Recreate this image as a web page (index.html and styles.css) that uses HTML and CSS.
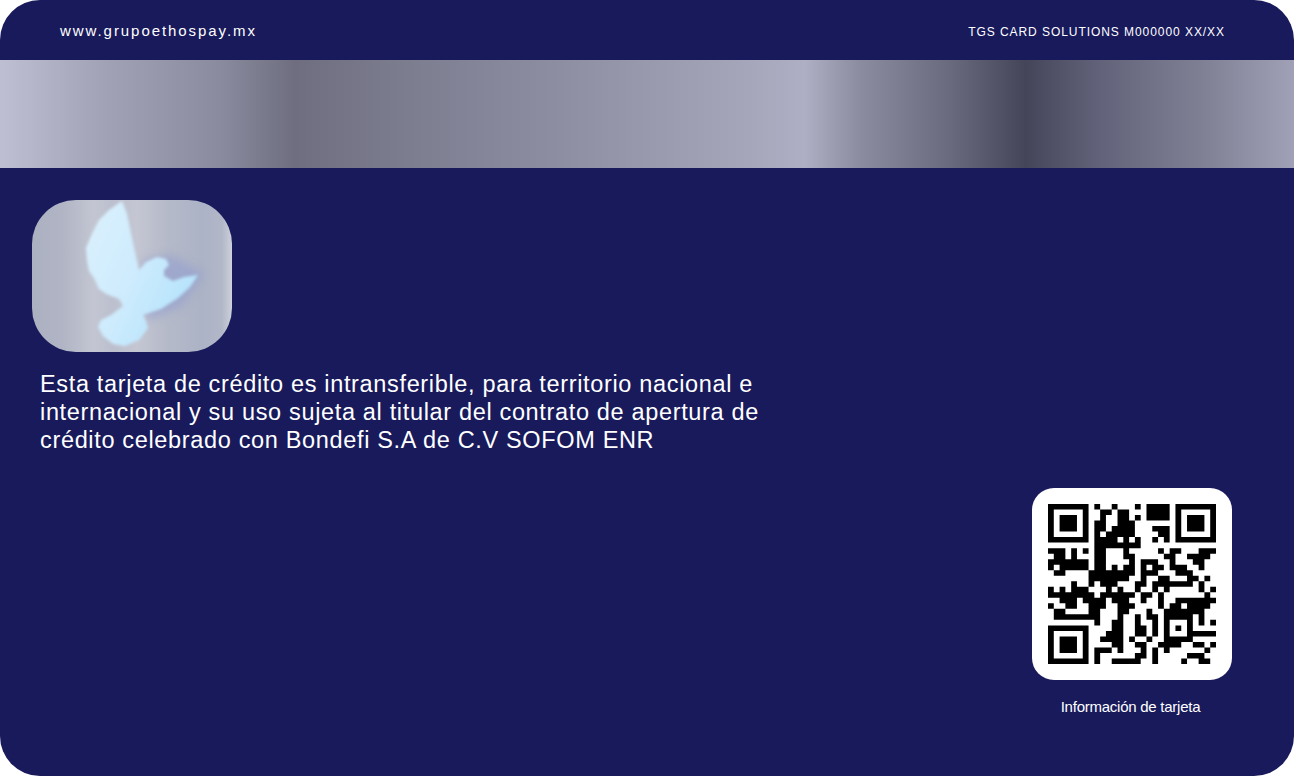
FILE: index.html
```html
<!DOCTYPE html>
<html lang="es">
<head>
    <meta charset="UTF-8">
    <meta name="viewport" content="width=device-width, initial-scale=1.0">
    <title>Tarjeta - reverso</title>
    <link rel="stylesheet" href="styles.css">
</head>
<body>
    <div class="card">
        <div class="card-top">
            <span class="site">www.grupoethospay.mx</span>
            <span class="issuer">TGS CARD SOLUTIONS M000000 XX/XX</span>
        </div>
        <div class="stripe"></div>
        <div class="card-body">
            <div class="holo">
                <svg class="dove" viewBox="0 0 200 152" preserveAspectRatio="none">
                    <defs>
                        <linearGradient id="doveFill" x1="0" y1="0" x2="1" y2="0.6">
                            <stop offset="0" stop-color="#dcf1fd"/>
                            <stop offset="0.55" stop-color="#cdebfd"/>
                            <stop offset="1" stop-color="#b4e2fb"/>
                        </linearGradient>
                        <filter id="soft" x="-20%" y="-20%" width="140%" height="140%"><feGaussianBlur stdDeviation="1.7"/></filter>
                        <filter id="softer" x="-30%" y="-30%" width="160%" height="160%"><feGaussianBlur stdDeviation="5"/></filter>
                    </defs>
                    <path class="dove-shade" d="M112 60L140 55L172 74L150 106L118 120L105 100Z" filter="url(#softer)"/>
                    <path fill="url(#doveFill)" filter="url(#soft)" d="M90 1L95 14L99 33L103 52L107 70L114 62L125 57L134 59L137 65L132 70L132 76L141 81L152 77L166 75L158 87L146 98L129 109L111 115L114 121L116 128L107 140L93 146L81 144L71 136L66 127L69 120L79 115L91 106L87 99L74 94L67 89L62 78L57 71L55 60L54 48L59 36L67 20L77 10Z"/>
                </svg>
            </div>
            <p class="legal">Esta tarjeta de crédito es intransferible, para territorio nacional e<br>internacional y su uso sujeta al titular del contrato de apertura de<br>crédito celebrado con Bondefi S.A de C.V SOFOM ENR</p>
            <div class="qr-block">
                <div class="qr-box">
                    <svg class="qr" viewBox="0 0 29 29" preserveAspectRatio="none">
                        <path class="qr-cells" d="M0 .5h7M8 .5h1M11 .5h1M15 .5h1M17 .5h4M22 .5h7
                        M0 1.5h1M6 1.5h1M9 1.5h2M12 1.5h2M17 1.5h4M22 1.5h1M28 1.5h1
                        M0 2.5h1M2 2.5h3M6 2.5h1M9 2.5h1M12 2.5h2M15 2.5h1M17 2.5h4M22 2.5h1M24 2.5h3M28 2.5h1
                        M0 3.5h1M2 3.5h3M6 3.5h1M8 3.5h2M12 3.5h3M22 3.5h1M24 3.5h3M28 3.5h1
                        M0 4.5h1M2 4.5h3M6 4.5h1M8 4.5h2M11 4.5h4M18 4.5h3M22 4.5h1M24 4.5h3M28 4.5h1
                        M0 5.5h1M6 5.5h1M8 5.5h1M10 5.5h5M19 5.5h2M22 5.5h1M28 5.5h1
                        M0 6.5h7M8 6.5h2M10 6.5h2M13 6.5h1M15 6.5h1M18 6.5h1M20 6.5h1M22 6.5h7
                        M8 7.5h8
                        M0 8.5h3M4 8.5h1M6 8.5h1M8 8.5h2M13 8.5h1M19 8.5h1M21 8.5h2M26 8.5h3
                        M1 9.5h2M4 9.5h1M8 9.5h2M13 9.5h2M20 9.5h2M24 9.5h4
                        M0 10.5h7M8 10.5h2M14 10.5h1M16 10.5h3M21 10.5h1M25 10.5h2
                        M0 11.5h1M2 11.5h5M8 11.5h2M11 11.5h1M13 11.5h2M16 11.5h1M18 11.5h2M21 11.5h3M26 11.5h1
                        M1 12.5h2M7 12.5h8M16 12.5h3M22 12.5h3
                        M7 13.5h7M16 13.5h1M19 13.5h2M24 13.5h2M27 13.5h1
                        M4 14.5h1M7 14.5h1M9 14.5h3M15 14.5h2M18 14.5h7M26 14.5h1
                        M0 15.5h1M2 15.5h1M4 15.5h3M10 15.5h1M12 15.5h1M15 15.5h1M18 15.5h1M20 15.5h1M26 15.5h1M28 15.5h1
                        M0 16.5h8M9 16.5h6M16 16.5h2M19 16.5h1M27 16.5h1
                        M2 17.5h3M6 17.5h4M11 17.5h3M16 17.5h1M19 17.5h1M22 17.5h7
                        M0 18.5h1M3 18.5h2M7 18.5h3M12 18.5h3M19 18.5h1M21 18.5h2M24 18.5h4
                        M1 19.5h2M7 19.5h2M12 19.5h2M17 19.5h1M20 19.5h6M26 19.5h1
                        M1 20.5h8M12 20.5h1M15 20.5h1M17 20.5h2M20 20.5h5M26 20.5h1
                        M8 21.5h1M11 21.5h2M15 21.5h1M18 21.5h1M20 21.5h1M24 21.5h1M26 21.5h1M28 21.5h1
                        M0 22.5h7M11 22.5h2M15 22.5h2M18 22.5h1M20 22.5h1M22 22.5h1M24 22.5h1
                        M0 23.5h1M6 23.5h1M10 23.5h3M15 23.5h2M18 23.5h1M20 23.5h1M24 23.5h5
                        M0 24.5h1M2 24.5h3M6 24.5h1M9 24.5h4M14 24.5h1M17 24.5h1M20 24.5h5
                        M0 25.5h1M2 25.5h3M6 25.5h1M11 25.5h2M15 25.5h2M19 25.5h4M25 25.5h2M28 25.5h1
                        M0 26.5h1M2 26.5h3M6 26.5h1M8 26.5h3M12 26.5h1M16 26.5h1M18 26.5h1M20 26.5h1M27 26.5h1
                        M0 27.5h1M6 27.5h1M8 27.5h1M15 27.5h2M18 27.5h1M24 27.5h3
                        M0 28.5h7M8 28.5h1M11 28.5h5M18 28.5h1M23 28.5h1M26 28.5h2"/>
                    </svg>
                </div>
                <span class="qr-label">Información de tarjeta</span>
            </div>
        </div>
    </div>
</body>
</html>
```
FILE: styles.css
```css
html, body {
    margin: 0;
    height: 100%;
    background-color: #fff;
    overflow: hidden;
}
body {
    font-family: "Liberation Sans", Arial, sans-serif;
}
.card {
    width: 1294px;
    height: 776px;
    background-color: #181a5b;
    border-radius: 40px;
    overflow: hidden;
    display: flex;
    flex-direction: column;
    color: #fff;
}
.card-top {
    height: 60px;
    flex: none;
    display: flex;
    align-items: center;
    justify-content: space-between;
    padding: 0 69px 0 60px;
    box-sizing: border-box;
}
.site {
    font-size: 15px;
    letter-spacing: 1.94px;
}
.issuer {
    margin-top: 3px;
    font-size: 12px;
    letter-spacing: 0.94px;
}
.stripe {
    height: 108px;
    flex: none;
    background: linear-gradient(90deg,
        #bfbfd3 0,
        #a3a3b8 100px,
        #8b8b9f 220px,
        #6e6e80 295px,
        #7c7c8f 400px,
        #8e8ea3 560px,
        #a5a5ba 740px,
        #aeaec4 805px,
        #8c8ca0 860px,
        #6a6a7e 950px,
        #45455a 1026px,
        #62627a 1100px,
        #7f7f94 1200px,
        #a0a0b6 1294px);
}
.card-body {
    flex: 1;
    display: flex;
    flex-direction: column;
    padding: 32px 62px 0 32px;
}
.holo {
    width: 200px;
    height: 152px;
    border-radius: 44px;
    overflow: hidden;
    background: linear-gradient(90deg,
        #acb1c1 0,
        #b0b4c4 30px,
        #c3c6d2 62px,
        #bcbfcd 80px,
        #c4c6d2 105px,
        #b5bac9 135px,
        #acb3c6 170px,
        #b2b7c8 190px,
        #ced1db 200px);
}
.dove {
    width: 200px;
    height: 152px;
    display: block;
}
.dove-shade {
    fill: #8f9bd0;
    opacity: 0.55;
}
.legal {
    margin: 18px 0 0 8px;
    font-size: 23.5px;
    line-height: 28px;
    letter-spacing: 0.66px;
}
.qr-block {
    align-self: flex-end;
    width: 200px;
    margin-top: 34px;
    display: flex;
    flex-direction: column;
    align-items: center;
}
.qr-box {
    width: 200px;
    height: 192px;
    box-sizing: border-box;
    padding: 16px;
    background-color: #fff;
    border-radius: 22px;
}
.qr {
    width: 168px;
    height: 160px;
    display: block;
}
.qr-cells {
    fill: none;
    stroke: #000;
    stroke-width: 1;
}
.qr-label {
    margin-top: 18px;
    margin-right: 3px;
    font-size: 15px;
    letter-spacing: -0.25px;
}
```
